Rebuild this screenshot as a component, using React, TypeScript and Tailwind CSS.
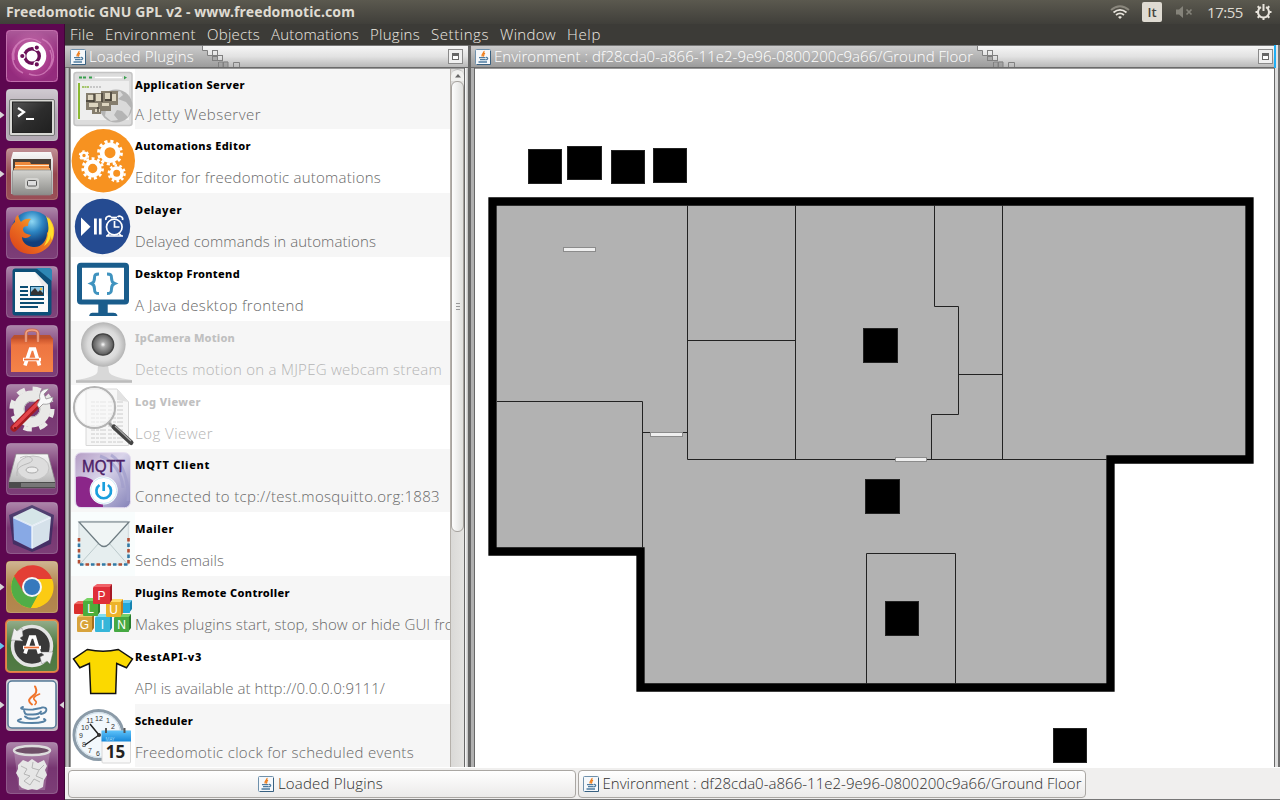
import React, { useLayoutEffect, useRef, useState } from "react";

/* Text stretched to a fixed advance width by adjusting its tracking. */
function Fit({ w, className = "", children }: { w: number; className?: string; children: string }) {
  const ref = useRef<HTMLSpanElement>(null);
  const [ls, setLs] = useState(0);
  useLayoutEffect(() => {
    if (ref.current) {
      const natural = ref.current.getBoundingClientRect().width;
      setLs((w - natural) / children.length);
    }
  }, []);
  return (
    <span className={`block shrink-0 whitespace-pre ${className}`}>
      <span ref={ref} className="inline-block" style={{ letterSpacing: ls }}>
        {children}
      </span>
    </span>
  );
}

function Gear({ x, y, r, w, t, n, c = "#fff" }: { x: number; y: number; r: number; w: number; t: number; n: number; c?: string }) {
  const R = r + w / 2 + t / 2 - 0.4;
  const seg = (2 * Math.PI * R) / n;
  return (
    <g fill="none" stroke={c}>
      <circle cx={x} cy={y} r={r} strokeWidth={w} />
      <circle cx={x} cy={y} r={R} strokeWidth={t} strokeDasharray={`${seg * 0.52} ${seg * 0.48}`} />
    </g>
  );
}

function Cup() {
  return (
    <g fill="none" strokeLinecap="round">
      <path d="M26 27c-8-6 3-8 4-12 1-3 0-4-1-6" stroke="#f0742b" strokeWidth="2" />
      <path d="M29 27c4-4-3-4-1-7 1-1.500 4-3 5.500-3.500" stroke="#f0742b" strokeWidth="1.700" />
      <path d="M17 29.500c-6 2 3 3 10 2.500l8-1.500M18 33c1 5 3 4 9 4 5 0 7-1 8-3M36 30c6-1 6 5-1 6.500M19 39c3 3 11 3 14 .5M15 41.500c-9 3 3 4 11 4 9 0 17-2 12-4" stroke="#5681a4" strokeWidth="1.900" />
    </g>
  );
}

function JavaIcon() {
  return (
    <svg className="h-4 w-4 shrink-0" viewBox="0 0 16 16">
      <rect x=".5" y=".5" width="15" height="15" rx="1" fill="#f5f8fb" stroke="#6f91ac" />
      <path d="M15.500 2v13.500H2" fill="none" stroke="#386080" />
      <path d="M9 2C9.500 4 6 4.500 7.300 7.600M10 4.200C7.800 5.300 9.400 6 8.300 7.500" fill="none" stroke="#ef7d1a" strokeWidth="1.300" />
      <path d="M4 8.700h6.500M5 10.700h5.500M11 8.500c2.500-.3 2 2.300-.3 2.300M3.500 13h8.500" fill="none" stroke="#4d7ba0" strokeWidth="1.300" />
    </svg>
  );
}

const defs = (
  <svg className="absolute h-0 w-0">
    <defs>
      <linearGradient id="silver" x2="0" y2="1"><stop stopColor="#f8f8f8" /><stop offset="1" stopColor="#aaa" /></linearGradient>
      <linearGradient id="cabinet" x2="0" y2="1"><stop stopColor="#d4d4d0" /><stop offset="1" stopColor="#8c8c89" /></linearGradient>
      <linearGradient id="screen" x2="1" y2="1"><stop stopColor="#555" /><stop offset=".5" stopColor="#2d2d2d" /><stop offset="1" stopColor="#202020" /></linearGradient>
      <radialGradient id="globe" cx=".5" cy=".25"><stop stopColor="#90d9f4" /><stop offset=".5" stopColor="#2d86c3" /><stop offset="1" stopColor="#123e7b" /></radialGradient>
      <linearGradient id="fox" x1="0" y1="1" x2="1" y2="0"><stop stopColor="#d83b18" /><stop offset=".5" stopColor="#ee7421" /><stop offset="1" stopColor="#ffe12c" /></linearGradient>
      <linearGradient id="bag" x2="0" y2="1"><stop stopColor="#c9532b" /><stop offset=".2" stopColor="#ed7541" /><stop offset="1" stopColor="#f58348" /></linearGradient>
      <radialGradient id="ball"><stop stopColor="#f3f3f3" /><stop offset=".7" stopColor="#dadada" /><stop offset="1" stopColor="#b4b4b4" /></radialGradient>
      <radialGradient id="lens"><stop stopColor="#fff" /><stop offset=".25" stopColor="#aaa" /><stop offset="1" stopColor="#575757" /></radialGradient>
      <linearGradient id="mqtt" x2="1" y2="1"><stop stopColor="#b49cc4" /><stop offset=".45" stopColor="#d9d4ea" /><stop offset="1" stopColor="#8482b8" /></linearGradient>
      <linearGradient id="shine" x2="0" y2="1"><stop stopColor="#fff" stopOpacity=".45" /><stop offset=".5" stopColor="#fff" stopOpacity=".08" /><stop offset="1" stopColor="#fff" stopOpacity=".12" /></linearGradient>
      <linearGradient id="cal" x2="0" y2="1"><stop stopColor="#5fc4fb" /><stop offset="1" stopColor="#1687d8" /></linearGradient>
      <linearGradient id="titleGrey" x2="0" y2="1"><stop stopColor="#cccccc" /><stop offset="1" stopColor="#9c9c9c" /></linearGradient>
      <radialGradient id="dash"><stop stopColor="#d05aa9" /><stop offset="1" stopColor="#8d1d74" /></radialGradient>
    </defs>
  </svg>
);

const DASH = (
  <>
    <rect width="52" height="52" rx="4" fill="url(#dash)" />
    <rect x=".5" y=".5" width="51" height="51" rx="4" fill="url(#shine)" opacity=".6" stroke="#e4a6d2" />
    <path d="M8 30C5 12 22 3 35 13M44 20c7 15-6 30-21 24M17 43C5 38 2 20 14 12M36 9c12 5 15 20 7 30" fill="none" stroke="#dc8bc4" strokeWidth="1.500" opacity=".7" />
    <circle cx="26" cy="26" r="14.300" fill="#fff" />
    <circle cx="26" cy="26" r="7.300" fill="none" stroke="#6b1058" strokeWidth="3.400" />
    <g fill="#6b1058" stroke="#fff" strokeWidth="1.200"><circle cx="16.300" cy="26" r="2.700" /><circle cx="30.800" cy="17.600" r="2.700" /><circle cx="30.800" cy="34.400" r="2.700" /></g>
  </>
);
const TERMINAL = (
  <>
    <rect x="3.500" y="10.500" width="45" height="36" rx="1.500" fill="#d8d8d4" stroke="#777" />
    <rect x="6.500" y="13" width="39" height="30.500" fill="url(#screen)" stroke="#222" />
    <path d="M12 19l6 4-6 4.500" fill="none" stroke="#fff" strokeWidth="2.200" /><path d="M20 30h8" stroke="#fff" strokeWidth="2" />
  </>
);
const FILES = (
  <>
    <path d="M7 4h38l2 7v35H5V11z" fill="url(#silver)" /><rect x="7" y="11" width="38" height="12" fill="#4b4038" />
    <path d="M9 14h15l1 2h18v9H9z" fill="#ef8a3c" /><path d="M9 17.500h34" stroke="#ffe5c5" /><path d="M8 20h36v4H8z" fill="#f6ad66" />
    <rect x="6.500" y="22" width="39" height="25" rx="1.500" fill="url(#cabinet)" stroke="#8a8a88" strokeWidth=".7" />
    <rect x="19" y="30" width="14" height="11" rx="2.500" fill="#d4d4d1" /><rect x="21.500" y="32.500" width="9" height="5.500" rx="1" fill="#ddd" stroke="#555" />
  </>
);
const FIREFOX = (
  <>
    <circle cx="26" cy="25" r="21" fill="url(#globe)" />
    <path d="M12 8c-3 2-3 5-3 7C5 18 3 24 4 30c2 12 13 18 23 17 13-1 23-12 21-26-1-5-4-9-6-11 3 8 1 14-1 16 0 8-6 15-14 14-7-1-11-5-11-10 3 2 7 1 9-2-6-1-8-3-8-6 0-2 2-3 5-3 0-4 2-6 3-7-5-1-8 1-10 3-2-2-2-5-3-7z" fill="url(#fox)" />
    <path d="M40 9c7 6 9 16 6 24-1-1-1-3-1-5-1 6-4 9-7 11 5-8 6-20 2-30z" fill="#ffdf2c" />
  </>
);
const WRITER = (
  <>
    <rect x="6.500" y="2.500" width="39" height="47" rx="3" fill="#0d4f78" /><path d="M30 2h13q3 0 3 3v10z" fill="#2d87b4" />
    <path d="M9 6h20l13 13v27H9z" fill="#fafafa" /><path d="M29 6l13 13V31z" fill="#e4e4e4" opacity=".7" />
    <path d="M14 21h8M14 25h8M14 29h8M14 33h24M14 37h24M14 41h18" stroke="#0b4d73" strokeWidth="1.800" />
    <rect x="24.500" y="20.500" width="13" height="9" fill="#8ec5e2" stroke="#0b4d73" /><path d="M25 29v-3l4-4 3 4 2-2 3 3v2z" fill="#333" /><circle cx="35" cy="23" r="1.200" fill="#f5c13d" />
  </>
);
const LetterA = ({ c }: { c: string }) => (
  <g><path d="M19 40.500L24.500 24h4L33.500 40.500M17 34.500h18" fill="none" stroke="#fff" strokeWidth="3.600" /><path d="M18 34.500h15" stroke={c} strokeWidth="1.700" /></g>
);
const SOFTWARE = (
  <>
    <path d="M5 14l3-4h36l3 4z" fill="#b9502f" /><rect x="5" y="13.500" width="42" height="33.500" fill="url(#bag)" />
    <path d="M20 17V8.500q0-3.500 6-3.500t6 3.500V17" fill="none" stroke="#c96949" strokeWidth="3.200" /><path d="M20 17V8.500q0-3.500 6-3.500t6 3.500V17" fill="none" stroke="#f1a384" strokeWidth="1.600" />
    <LetterA c="#ee7138" />
  </>
);
const SETTINGS = (
  <>
    <Gear x={26} y={25} r={13} w={11} t={4.5} n={8} c="#e9e9e7" /><circle cx="26" cy="25" r="8" fill="none" stroke="#b5b5b5" />
    <path d="M8 44L33 19" stroke="#a51c21" strokeWidth="7" strokeLinecap="round" /><path d="M8 43L32 19" stroke="#e3444a" strokeWidth="3.500" strokeLinecap="round" />
    <path d="M31 21l3-6c-2-6 3-11 9-10l-5 5 2 5 7-2c0 6-5 8-10 7l-4 4z" fill="#f8f8f8" stroke="#888" strokeWidth=".7" /><circle cx="9" cy="44" r="1" fill="#661114" />
  </>
);
const DISK = (
  <>
    <path d="M10 11h32l7 27v7H3v-7z" fill="url(#silver)" stroke="#888" strokeWidth=".7" /><path d="M3 39h46v6H3z" fill="#4c4c4c" /><path d="M15 40h34v4H15z" fill="#777" />
    <ellipse cx="27" cy="25" rx="16" ry="12" fill="#ddd" stroke="#c2c2c2" /><ellipse cx="26" cy="27" rx="6" ry="3" fill="#eee" stroke="#aaa" /><path d="M14 15c9-5 17 2 9 5s-13 4-12 13" stroke="#b9b9b9" fill="none" />
  </>
);
const CUBE = (
  <>
    <path d="M26 3l22 10-3 29-19 8L7 42 3 13z" fill="#2a2a5c" opacity=".65" />
    <path d="M26 6l19 9-19 9L7 15z" fill="#d5e5e8" /><path d="M7 15l19 9v23L8 38z" fill="#88a9e5" /><path d="M26 24l19-9-2 23-17 9z" fill="#d5e1ea" />
    <path d="M7.500 15.500L26 24l18.500-8.500M26 24v22" fill="none" stroke="#f3f9ff" strokeWidth="1.600" opacity=".8" />
  </>
);
const CHROME = (
  <>
    <circle cx="26" cy="26" r="21" fill="#fbcb13" /><path d="M26 26L8 15.500A21 21 0 0 0 25 47l9-15z" fill="#51ad47" />
    <path d="M26 18h20a21 21 0 0 1-21 29l9-17z" fill="#fbcb13" /><path d="M8 15l10 17 8-14h20A21 21 0 0 0 8 15z" fill="#e33e35" />
    <circle cx="26" cy="26" r="10" fill="#f6f6f6" /><circle cx="26" cy="26" r="8" fill="#3679bd" />
  </>
);
const UPDATER = (
  <>
    <rect x="0" y="0" width="52" height="52" rx="4" fill="none" stroke="#ff8b43" strokeWidth="2" strokeOpacity=".8" />
    <circle cx="26" cy="26" r="19.500" fill="#393939" stroke="#e4e4e4" strokeWidth="3.500" />
    <path d="M5 20L8 8l3 3 5-3 1 8-3 2 3 3zM47 32l-3 12-3-3-5 3-2-7 4-2-4-3z" fill="#efefef" stroke="#777" strokeWidth=".4" />
    <g transform="translate(0 -7)"><LetterA c="#ee7138" /></g>
  </>
);
const JAVA = (
  <>
    <rect x="2" y="2" width="48" height="47" rx="4" fill="#f7f8fa" stroke="#557b98" strokeWidth="1.500" /><g transform="translate(0 -1.500)"><Cup /></g>
  </>
);
const TRASH = (
  <>
    <path d="M8 9h36l-5 39H13z" fill="#fff" opacity=".2" />
    <path d="M12 23l5-5 5 2 4-3 6 4 6-3 3 6-2 4 2 5-3 5-1 7-6 3-5-1-4 1-6-2-3-3v-7l-3-5 2-4z" fill="#e6e6e6" />
    <path d="M15 24l6 3-3 5 6 2M27 20l-1 6 7 2 5-5M24 34l-6 5 6 4 4-6 6 3M33 28l-3 6 7 3" fill="none" stroke="#b5b5b5" />
    <ellipse cx="26" cy="8.500" rx="18" ry="4.500" fill="#6f5068" stroke="#ddd" strokeWidth="2.500" />
  </>
);

const LAUNCHER: { art: React.ReactNode; bg: string; left?: string; right?: boolean }[] = [
  { art: DASH, bg: "bg-[#a03389]" },
  { art: TERMINAL, bg: "bg-[#a99faa]", left: "#d8d4d6" },
  { art: FILES, bg: "bg-[#8c3740]", left: "#d8d4d6" },
  { art: FIREFOX, bg: "bg-[#6b2465]" },
  { art: WRITER, bg: "bg-[#6d2968]" },
  { art: SOFTWARE, bg: "bg-[#6b2465]" },
  { art: SETTINGS, bg: "bg-[#6b2465]" },
  { art: DISK, bg: "bg-[#6b2465]" },
  { art: CUBE, bg: "bg-[#6b2465]" },
  { art: CHROME, bg: "bg-[#a97838]", left: "#d8d4d6" },
  { art: UPDATER, bg: "bg-[#3b6a2c]", left: "#66c4ef" },
  { art: JAVA, bg: "bg-[#b5a3b1]", left: "#d8d4d6", right: true },
  { art: TRASH, bg: "bg-[#6b2465]" },
];

function Launcher() {
  return (
    <aside className="flex w-[65px] shrink-0 flex-col gap-[7px] border-r border-[#3f0536] bg-[#5d0750] pt-[6px]">
      {LAUNCHER.map((it, i) => (
        <div key={i} className={`flex items-center ${i === 12 ? "mt-1" : ""}`}>
          <svg className="h-2.5 w-1.5 shrink-0" viewBox="0 0 6 10">{it.left && <path d="M0 1.500L4.500 5 0 8.500z" fill={it.left} />}</svg>
          <div className={`h-[52px] w-[52px] shrink-0 rounded ${it.bg}`}>
            <svg className="block overflow-visible" width="52" height="52" viewBox="0 0 52 52">
              <rect x=".5" y=".5" width="51" height="51" rx="4" fill="url(#shine)" stroke="#fff" strokeOpacity=".2" />
              {it.art}
            </svg>
          </div>
          <svg className="h-2.5 w-1.5 shrink-0" viewBox="0 0 6 10">{it.right && <path d="M6 1.500L1.500 5 6 8.500z" fill="#d8d4d6" />}</svg>
        </div>
      ))}
    </aside>
  );
}

const Cube3 = ({ x, y, s, c, d, t, ch }: { x: number; y: number; s: number; c: string; d: string; t: string; ch?: string }) => (
  <g>
    <path d={`M${x} ${y + 3}l4-3h${s - 2}l-2 4z`} fill={t} /><path d={`M${x + s - 1} ${y + 4}l3-4v${s - 1}l-3 4z`} fill={d} />
    <rect x={x} y={y + 3} width={s} height={s} rx="1" fill={c} />
    {ch && <text x={x + s / 2} y={y + s / 2 + 7} textAnchor="middle" fontFamily="Liberation Sans, sans-serif" fontSize="12" fill="#fff">{ch}</text>}
  </g>
);

const PLUGINS: { name: string; nw: number; desc: string; dw: number; h: string; dim?: boolean; whiteIcon?: boolean; icon: React.ReactNode }[] = [
  { name: "Application Server", nw: 110, desc: "A Jetty Webserver", dw: 126, h: "h-[60px]", whiteIcon: true, icon: (
    <>
      <rect x="3" y="3.500" width="58" height="53" rx="2.500" fill="#dcdcdc" stroke="#c4c4c4" strokeWidth="1.500" /><rect x="6" y="12" width="52" height="39" fill="#eee" />
      <path d="M8 8.500h8M18 8.500h4" stroke="#39a04e" strokeWidth="2.200" strokeDasharray="3 1" /><path d="M24 8.500h27" stroke="#fff" strokeWidth="1.500" /><path d="M53 7l3 1.500-3 2z" fill="#39a04e" />
      <rect x="7" y="14" width="2" height="36" fill="#8ab833" /><path d="M11 18h7" stroke="#a5c56d" strokeWidth="1.800" strokeDasharray="2 .5" /><path d="M19 18h11" stroke="#bbb" strokeWidth="1.500" strokeDasharray="2 1" />
      <circle cx="45" cy="37" r="16.500" fill="#b4b4b4" /><path d="M38 22l7 2 4-2 3 4-5 4 8 3 5 6-3 9-6-6-5-1-3 5 4 5-7 1-6-5" fill="#dadada" />
      <path d="M15 24h15v-2h17v14H40v6H30v3H21v-4h-6z" fill="#857d6d" /><path d="M17 26h6v5h-6zM25 25h5v7h-5zM34 24h5v6h-5zM41 25h4v7h-4zM18 34h9v4h-9zM24 40h5v3h-5zM31 34h7v3h-7z" fill="#ddd5c0" /><path d="M23 25v8M31 24v9M15 32h8M40 23v9M27 38v5M34 31h6" stroke="#3f3a32" strokeWidth="1.300" />
    </>) },
  { name: "Automations Editor", nw: 116, desc: "Editor for freedomotic automations", dw: 246, h: "h-16", icon: (
    <>
      <circle cx="32.300" cy="31.700" r="31.700" fill="#f79220" />
      <Gear x={39} y={23.700} r={7.900} w={4.800} t={3} n={12} /><Gear x={21.700} y={39.500} r={6.800} w={4.300} t={2.700} n={11} /><Gear x={45.700} y={44.300} r={5.300} w={3.600} t={2.400} n={10} /><Gear x={13} y={26.500} r={2.900} w={2.400} t={1.500} n={6} />
    </>) },
  { name: "Delayer", nw: 47, desc: "Delayed commands in automations", dw: 241, h: "h-16", icon: (
    <>
      <circle cx="31.500" cy="33.500" r="27.700" fill="#254b91" />
      <path d="M10 24.500l9.500 9.200-9.500 9.200zM23 25.500h2.800v16H23zM27.900 25.500h2.700v16h-2.700z" fill="#fff" />
      <g fill="none" stroke="#fff" strokeWidth="1.700"><circle cx="43.300" cy="34" r="7.800" /><path d="M43.500 28v6h5M35 27c-1-3 3-5 5-3M51.500 27c1-3-3-5-5-3M36 43l3-3M50.500 43l-3-3M35 43h17" /><path d="M40 24.500h6" /></g>
    </>) },
  { name: "Desktop Frontend", nw: 105, desc: "A Java desktop frontend", dw: 169, h: "h-16", icon: (
    <>
      <rect x="8.500" y="8.300" width="47" height="36.800" rx="1.500" fill="#fff" stroke="#1a5d8c" strokeWidth="5" /><path d="M27.300 46h9.400v10h-9.400zM18.300 59v-1q1-2.200 3-2.200h21q3 0 4 2.200v1z" fill="#1a5d8c" />
      <path d="M28 16.500c-4 0-4.500 1-4.500 4 0 3-.5 4.500-3 5.500 2.500 1 3 2.500 3 5.500s.5 4.500 4.500 4.500M36 16.500c4 0 4.500 1 4.500 4 0 3 .5 4.500 3 5.500-2.500 1-3 2.500-3 5.500s-.5 4.500-4.500 4.500" transform="translate(0 .5)" fill="none" stroke="#3f93bf" strokeWidth="3" />
    </>) },
  { name: "IpCamera Motion", nw: 100, desc: "Detects motion on a MJPEG webcam stream", dw: 307, h: "h-16", dim: true, icon: (
    <>
      <path d="M27 44h10l1 7q2 5 23 8v2.500H5V59q20-3 21.500-8z" fill="#d8d8d8" /><path d="M5 60.500h56" stroke="#bcbcbc" strokeWidth="2.500" />
      <circle cx="32.300" cy="23.500" r="22.300" fill="url(#ball)" /><circle cx="32" cy="23.500" r="10.700" fill="url(#lens)" stroke="#444" strokeWidth="1.300" />
    </>) },
  { name: "Log Viewer", nw: 66, desc: "Log Viewer", dw: 78, h: "h-16", dim: true, icon: (
    <>
      <path d="M17 4h29l11.500 13v43.500H15V6q0-2 2-2z" fill="#f7f7f7" stroke="#d8d8d8" /><path d="M46 4v11l11.500 2z" fill="#e2e2e2" />
      <path d="M20 17h33M20 21h33M20 25h33M20 29h33M20 33h33M20 37h33M20 41h32M20 45h32M20 49h32M20 53h32M20 57h32" stroke="#ccc" strokeDasharray="4 1 3 1 6 2" />
      <circle cx="23.500" cy="22.500" r="20.500" fill="#f8f8f8" fillOpacity=".6" stroke="#b4b4b4" strokeWidth="2.200" /><circle cx="23.500" cy="22.500" r="19" fill="none" stroke="#eee" />
      <path d="M38 38l4 4" stroke="#999" strokeWidth="3" /><path d="M43 42l17 15.500" stroke="#444" strokeWidth="5" strokeLinecap="round" /><path d="M44 41l16 15" stroke="#aaa" strokeWidth="1.300" />
    </>) },
  { name: "MQTT Client", nw: 75, desc: "Connected to tcp://test.mosquitto.org:1883", dw: 305, h: "h-[63px]", icon: (
    <>
      <rect x="4" y="3.700" width="55.500" height="55" rx="6" fill="url(#mqtt)" stroke="#e4dcef" />
      <path d="M5 28c16-3 26 8 27 30H10q-5 0-5-6z" fill="#8b2689" /><path d="M40 6c12 7 18 27 17 46M29 7c14 5 22 18 23 32" fill="none" stroke="#9f9ccb" strokeWidth="3" opacity=".7" />
      <text x="11" y="23" textLength="43" lengthAdjust="spacingAndGlyphs" fontFamily="Liberation Sans, sans-serif" fontSize="17" fill="#4b2066" stroke="#4b2066" strokeWidth=".4">MQTT</text>
      <circle cx="32.700" cy="41.500" r="14" fill="#fff" /><circle cx="32.700" cy="41.500" r="13" fill="none" stroke="#c4e5f3" strokeWidth=".8" />
      <path d="M28.500 36a7.300 7.300 0 1 0 8.400 0M32.700 33v9" fill="none" stroke="#1a9fdd" strokeWidth="2.700" />
    </>) },
  { name: "Mailer", nw: 39, desc: "Sends emails", dw: 89, h: "h-16", icon: (
    <>
      <rect width="64" height="64" fill="#f9fdfd" /><rect x="8" y="9.500" width="49.500" height="43" rx="1.500" fill="#e6eeef" stroke="#d5dde0" strokeWidth="1.500" />
      <path d="M8 26v26.500h49.500V26" fill="none" stroke="#b34d32" strokeWidth="2.600" strokeDasharray="3.500 7.500" /><path d="M8 26v26.500h49.500V26" fill="none" stroke="#3179a5" strokeWidth="2.600" strokeDasharray="3.500 7.500" strokeDashoffset="-5.500" />
      <path d="M10 51l18-20M55.500 51L38 31" stroke="#bccacc" /><path d="M8 10l20 22q5 5 10 0l20-22z" fill="#f0f5f5" stroke="#6e7c82" strokeWidth="1.200" />
    </>) },
  { name: "Plugins Remote Controller", nw: 155, desc: "Makes plugins start, stop, show or hide GUI from", dw: 332, h: "h-16", icon: (
    <>
      <Cube3 x={3} y={25} s={10} c="#d92f2d" d="#9f1717" t="#ee6760" /><Cube3 x={49} y={24} s={10} c="#22a9dc" d="#1684b1" t="#6bcdf0" />
      <Cube3 x={6} y={38} s={15} c="#d8a33b" d="#a56e1b" t="#f0c367" ch="G" /><Cube3 x={24} y={38} s={15} c="#36b6d9" d="#188cb4" t="#80def0" ch="I" /><Cube3 x={43} y={38} s={15} c="#46a942" d="#287d2d" t="#77d068" ch="N" />
      <Cube3 x={12} y={22} s={15} c="#4cae3c" d="#2e7e29" t="#78d264" ch="L" /><Cube3 x={35} y={23} s={15} c="#edb32a" d="#c07c1b" t="#ffdc68" ch="U" /><Cube3 x={22} y={8} s={17} c="#df2e39" d="#a61824" t="#f06268" ch="P" />
    </>) },
  { name: "RestAPI-v3", nw: 67, desc: "API is available at http://0.0.0.0:9111/", dw: 250, h: "h-16", icon: (
    <path d="M16.300 9.500q16 3.500 31 0L61.500 19 55.500 27.800 45.700 23.500l-1 30h-25l-1.300-30L8.800 27.800 2.500 19z" fill="#fbd900" stroke="#111" strokeWidth="1.500" />) },
  { name: "Scheduler", nw: 58, desc: "Freedomotic clock for scheduled events", dw: 279, h: "h-[63px]", whiteIcon: true, icon: (
    <>
      <circle cx="27.500" cy="31" r="24.500" fill="#f2f8fc" stroke="#8b9ba8" strokeWidth="3" /><circle cx="27.500" cy="31" r="22.300" fill="none" stroke="#cddde8" />
      <g fontFamily="Liberation Sans, sans-serif" fontSize="7" fill="#333" textAnchor="middle"><text x="28" y="17">12</text><text x="19" y="19">11</text><text x="14" y="26">10</text><text x="10" y="34">9</text><text x="13" y="43">8</text><text x="19" y="49">7</text><text x="27" y="52">6</text><text x="37" y="19">1</text><text x="42" y="25">2</text></g>
      <path d="M28 31L14 41M28 31l-9-11" stroke="#222" strokeWidth="1.500" /><circle cx="28" cy="31" r="2" fill="#333" />
      <rect x="31" y="27" width="28.500" height="32" rx="1" fill="#f9f9f9" stroke="#d8d8d8" /><rect x="30.500" y="26.500" width="29.500" height="11" fill="url(#cal)" /><path d="M35 29v-5M53.500 29v-5" stroke="#555" strokeWidth="2" />
      <text x="44.500" y="54" textAnchor="middle" fontFamily="Noto Sans, sans-serif" fontWeight="bold" fontSize="17" fill="#222">15</text><text x="39" y="36.500" textAnchor="middle" fontFamily="Noto Sans, sans-serif" fontSize="4.500" fill="#bce5ff">MAY</text>
    </>) },
];

function PluginRow({ p, i }: { p: (typeof PLUGINS)[number]; i: number }) {
  const grey = i % 2 === 0;
  return (
    <div className={`flex shrink-0 overflow-hidden ${p.h} ${grey ? "bg-[#f6f6f6]" : "bg-white"}`}>
      <div className={`h-full w-16 shrink-0 overflow-hidden ${p.whiteIcon ? "bg-white" : ""}`}>
        <svg className="block" width="64" height="64" viewBox="0 0 64 64">{p.icon}</svg>
      </div>
      <div className={`flex min-w-0 flex-col ${i === 0 || i === 6 ? "pt-[8px]" : "pt-[9px]"}`}>
        <Fit w={p.nw} className={`h-4 font-['Noto_Sans',sans-serif] text-[11px] leading-4 font-extrabold ${p.dim ? "text-[#c0c0c0]" : "text-black"}`}>{p.name}</Fit>
        <Fit w={p.dw} className={`text-[15px] leading-5 ${i === 0 ? "mt-[11px]" : "mt-[13px]"} ${p.dim ? "text-[#b4b4b4]" : "text-[#686868]"}`}>{p.desc}</Fit>
      </div>
    </div>
  );
}

function FrameTitle({ text, w, env }: { text: string; w: number; env?: boolean }) {
  return (
    <div className="flex h-[23px] shrink-0 items-center border-t border-b border-t-[#777] border-b-[#6a6a6a] bg-linear-to-b from-[#f6f6f6] via-[#e2e2e2] to-[#b8b8b8]">
      <div className={`flex h-full items-center gap-[3px] bg-linear-to-b from-[#cccccc] to-[#9c9c9c] ${env ? "pl-[4px]" : "pl-[5px]"}`}>
        <JavaIcon />
        <Fit w={w} className="relative z-10 mb-[2px] text-[15px] leading-5 text-white">{text}</Fit>
      </div>
      <svg className={`shrink-0 ${env ? "-ml-1" : ""}`} width="48" height="21" viewBox="0 0 48 21">
        <path d="M0 0H8.500V4.500H13.500V9.500H24V15.500H34V21H0z" fill="url(#titleGrey)" />
        <g fill="none" stroke="#808080"><path d="M8.500 0v4.500h5v5h5" /><rect x="18.500" y="4.500" width="5" height="5" /><rect x="18.500" y="10.500" width="5" height="4" fill="#aaa" /><rect x="23.500" y="9.500" width="5" height="5" /><path d="M24.500 21v-5h4.500v5M29.500 21v-5h4.500v5" /><path d="M39.500 21.500v-5h6v5" /></g>
      </svg>
      <span className="flex-1" />
      <span className={`flex h-[15px] w-[15px] items-center justify-center border border-[#8a8a8a] bg-[#f0f0f0] ${env ? "mr-px" : "mr-[5px]"}`}>
        <span className="h-[7px] w-[7px] border border-t-3 border-[#666] bg-white" />
      </span>
      {env && <span className="-my-px h-[23px] w-[2px] bg-[#1eaef5]" />}
      {env && <span className="-my-px h-[23px] w-[4px] border-r-2 border-[#777] bg-[#e4e4e4]" />}
    </div>
  );
}

const SQUARES = [[528, 149, 34, 35], [567, 146, 35, 34], [611, 150, 34, 34], [653, 148, 34, 35], [863, 328, 35, 35], [865, 479, 35, 35], [885, 601, 34, 35], [1053, 728, 34, 35]];
const DOORS = [[563, 247], [650, 432], [895, 457]];

function FloorPlan() {
  return (
    <svg className="block shrink-0 bg-white" width="799" height="698" viewBox="475 69 799 698">
      <path d="M492.500 201.500H1249.500V459.500H1110.500V687.500H640.500V551.500H492.500Z" fill="#b2b2b2" stroke="#000" strokeWidth="8.300" />
      <path d="M687.500 205V459.500H1107M687 340.500H795.500M795.500 205V459M934.500 205V306.500H958.500V414.500H931.500V459M958.500 374.500H1002.500M1002.500 205V459M497 401.500H642.500V548M642.500 432.500H687.500M866.500 684V553.500H955.500V684" fill="none" stroke="#222" />
      {SQUARES.map(([x, y, w, h], i) => <rect key={i} x={x + 0.5} y={y + 0.5} width={w - 1} height={h - 1} fill="#000" stroke="#222" />)}
      {DOORS.map(([x, y], i) => <rect key={i} x={x + 0.5} y={y + 0.5} width={i === 2 ? 31 : 32} height="4" fill="#efefef" stroke="#8b8b8b" />)}
    </svg>
  );
}

const MENU: [string, number][] = [["File", 24], ["Environment", 91], ["Objects", 53], ["Automations", 88], ["Plugins", 50], ["Settings", 58], ["Window", 56], ["Help", 34]];

function TaskButton({ text, w, shift }: { text: string; w: number; shift?: boolean }) {
  return (
    <div className={`flex h-[28px] w-[508px] items-center justify-center gap-1 rounded border border-[#aaa7a3] bg-linear-to-b from-white to-[#ebeae9] ${shift ? "pr-[3px]" : ""}`}>
      <JavaIcon />
      <Fit w={w} className="mb-[2px] text-[15px] leading-5 text-[#303030]">{text}</Fit>
    </div>
  );
}

export default function App() {
  return (
    <div className="flex h-[800px] w-[1280px] flex-col overflow-hidden bg-[#3c3b37] font-['Open_Sans',sans-serif] font-light">
      {defs}
      <header className="flex h-6 shrink-0 items-center bg-linear-to-b from-[#5b594f] to-[#403f3a] pr-[8px] pl-[6px] text-[#dfdbd2]">
        <Fit w={349} className="font-['Noto_Sans',sans-serif] text-[14px] leading-6 font-bold">Freedomotic GNU GPL v2 - www.freedomotic.com</Fit>
        <span className="flex-1" />
        <svg width="20" height="16" viewBox="0 0 20 16" fill="none" stroke="#e8e4dc" strokeWidth="1.800">
          <path d="M1 6Q10-1.500 19 6" stroke="#8a877d" /><path d="M3.500 8.500Q10 3.300 16.500 8.500M6 11q4-3.200 8 0" /><path d="M8 13l2-1 2 1-2 2z" fill="#e8e4dc" stroke="none" />
        </svg>
        <span className="ml-[12px] flex h-5 w-5 items-center justify-center rounded-[2px] bg-[#dfdbd2] text-[13px] leading-5 font-semibold text-[#45443f]">It</span>
        <svg className="ml-[13px]" width="19" height="14" viewBox="0 0 19 14"><path d="M1 4.500h3L8 1v12L4 9.500H1z" fill="#85837a" /><path d="M11.500 4.500l5 5m0-5l-5 5" stroke="#85837a" strokeWidth="1.700" /></svg>
        <Fit w={36} className="ml-[13px] text-[15px] leading-6 font-normal">17:55</Fit>
        <svg className="ml-[12px]" width="17" height="18" viewBox="0 0 17 18" fill="none" stroke="#e8e4dc">
          <path d="M6 4.200a5.500 5.500 0 1 0 5 0M8.500 1v7" strokeWidth="2" /><path d="M.5 9h3M13.500 9h3M8.500 14v3M2.700 3.200l2 2M14.300 3.200l-2 2M2.700 14.800l2-2M14.300 14.800l-2-2" strokeWidth="2" />
        </svg>
      </header>
      <div className="flex min-h-0 flex-1">
        <Launcher />
        <div className="flex min-w-0 flex-1 flex-col">
          <nav className="flex h-[21px] shrink-0 items-center gap-[11px] pb-[2px] pl-[5px]">
            {MENU.map(([t, w]) => <Fit key={t} w={w} className="text-[15px] leading-5 text-[#eeeae2]">{t}</Fit>)}
          </nav>
          <div className="flex min-h-0 flex-1 bg-[#666]">
            <section className="flex w-[403px] shrink-0 flex-col">
              <FrameTitle text="Loaded Plugins" w={105} />
              <div className="flex min-h-0 flex-1">
                <div className="w-[5px] shrink-0 border-r border-[#686868] bg-linear-to-r from-[#777] via-[#ccc] to-[#999]" />
                <div className="flex min-h-0 min-w-0 flex-1 border-t border-l border-[#999] bg-white">
                  <div className="flex min-w-0 flex-1 flex-col overflow-hidden">
                    {PLUGINS.map((p, i) => <PluginRow key={p.name} p={p} i={i} />)}
                  </div>
                  <div className="flex w-[14px] shrink-0 flex-col border-l border-[#b5b0aa] bg-linear-to-r from-[#dad9d7] to-[#e5e4e2]">
                    <div className="flex h-[12px] shrink-0 items-center justify-center rounded-t-full border-t border-[#bbb] bg-[#f0f0ee]">
                      <svg width="6" height="4" viewBox="0 0 6 4"><path d="M0 3.500L3 0l3 3.500z" fill="#666" /></svg>
                    </div>
                    <div className="flex h-[451px] shrink-0 flex-col items-center justify-center gap-[2px] rounded-[6px] border border-[#a6a29e] bg-linear-to-r from-[#fdfdfd] to-[#dfdfdd]">
                      <span className="h-px w-1 bg-[#999]" /><span className="h-px w-1 bg-[#999]" /><span className="h-px w-1 bg-[#999]" />
                    </div>
                  </div>
                </div>
                <div className="w-[4px] shrink-0 border-l border-[#686868] bg-linear-to-r from-white to-[#bbb]" />
              </div>
            </section>
            <div className="w-[3px] shrink-0 bg-[#666]" />
            <section className="flex w-[809px] shrink-0 flex-col">
              <FrameTitle text="Environment : df28cda0-a866-11e2-9e96-0800200c9a66/Ground Floor" w={479} env />
              <div className="flex min-h-0 flex-1">
                <div className="w-[4px] shrink-0 border-r border-[#686868] bg-[#b0b0b0]" />
                <div className="flex w-[799px] shrink-0 flex-col border-t border-[#999]"><FloorPlan /></div>
                <div className="w-[4px] shrink-0 border-l border-[#686868] bg-[#ddd]" />
                <div className="w-[2px] shrink-0 bg-[#707070]" />
              </div>
            </section>
          </div>
          <footer className="flex h-[33px] shrink-0 items-start gap-[2px] border-t border-b border-t-white border-b-[#777] bg-[#f0efee] pt-[2px] pl-[3px]">
            <TaskButton text="Loaded Plugins" w={105} shift />
            <TaskButton text="Environment : df28cda0-a866-11e2-9e96-0800200c9a66/Ground Floor" w={479} />
          </footer>
        </div>
      </div>
    </div>
  );
}
